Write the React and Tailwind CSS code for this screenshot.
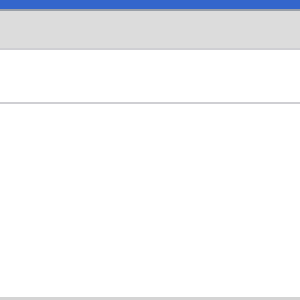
import React from "react";

const App = () => {
  return (
    <div className="w-[300px] h-[300px] flex flex-col bg-white overflow-hidden" style={{ fontFamily: "'Liberation Sans', Arial, sans-serif" }}>
      <div className="h-[9px] bg-[#3366cc] shrink-0" />
      <div className="h-[2px] bg-[#9aa0a8] shrink-0" />
      <div className="h-[37px] bg-[#dcdcdc] shrink-0" />
      <div className="h-[2px] bg-[#cfcfd3] shrink-0" />
      <div className="h-[52px] shrink-0" />
      <div className="h-[2px] bg-[#cfcfd3] shrink-0" />
      <div className="flex-1" />
      <div className="h-[3px] bg-[#d4d4d4] shrink-0" />
    </div>
  );
};

export default App;
